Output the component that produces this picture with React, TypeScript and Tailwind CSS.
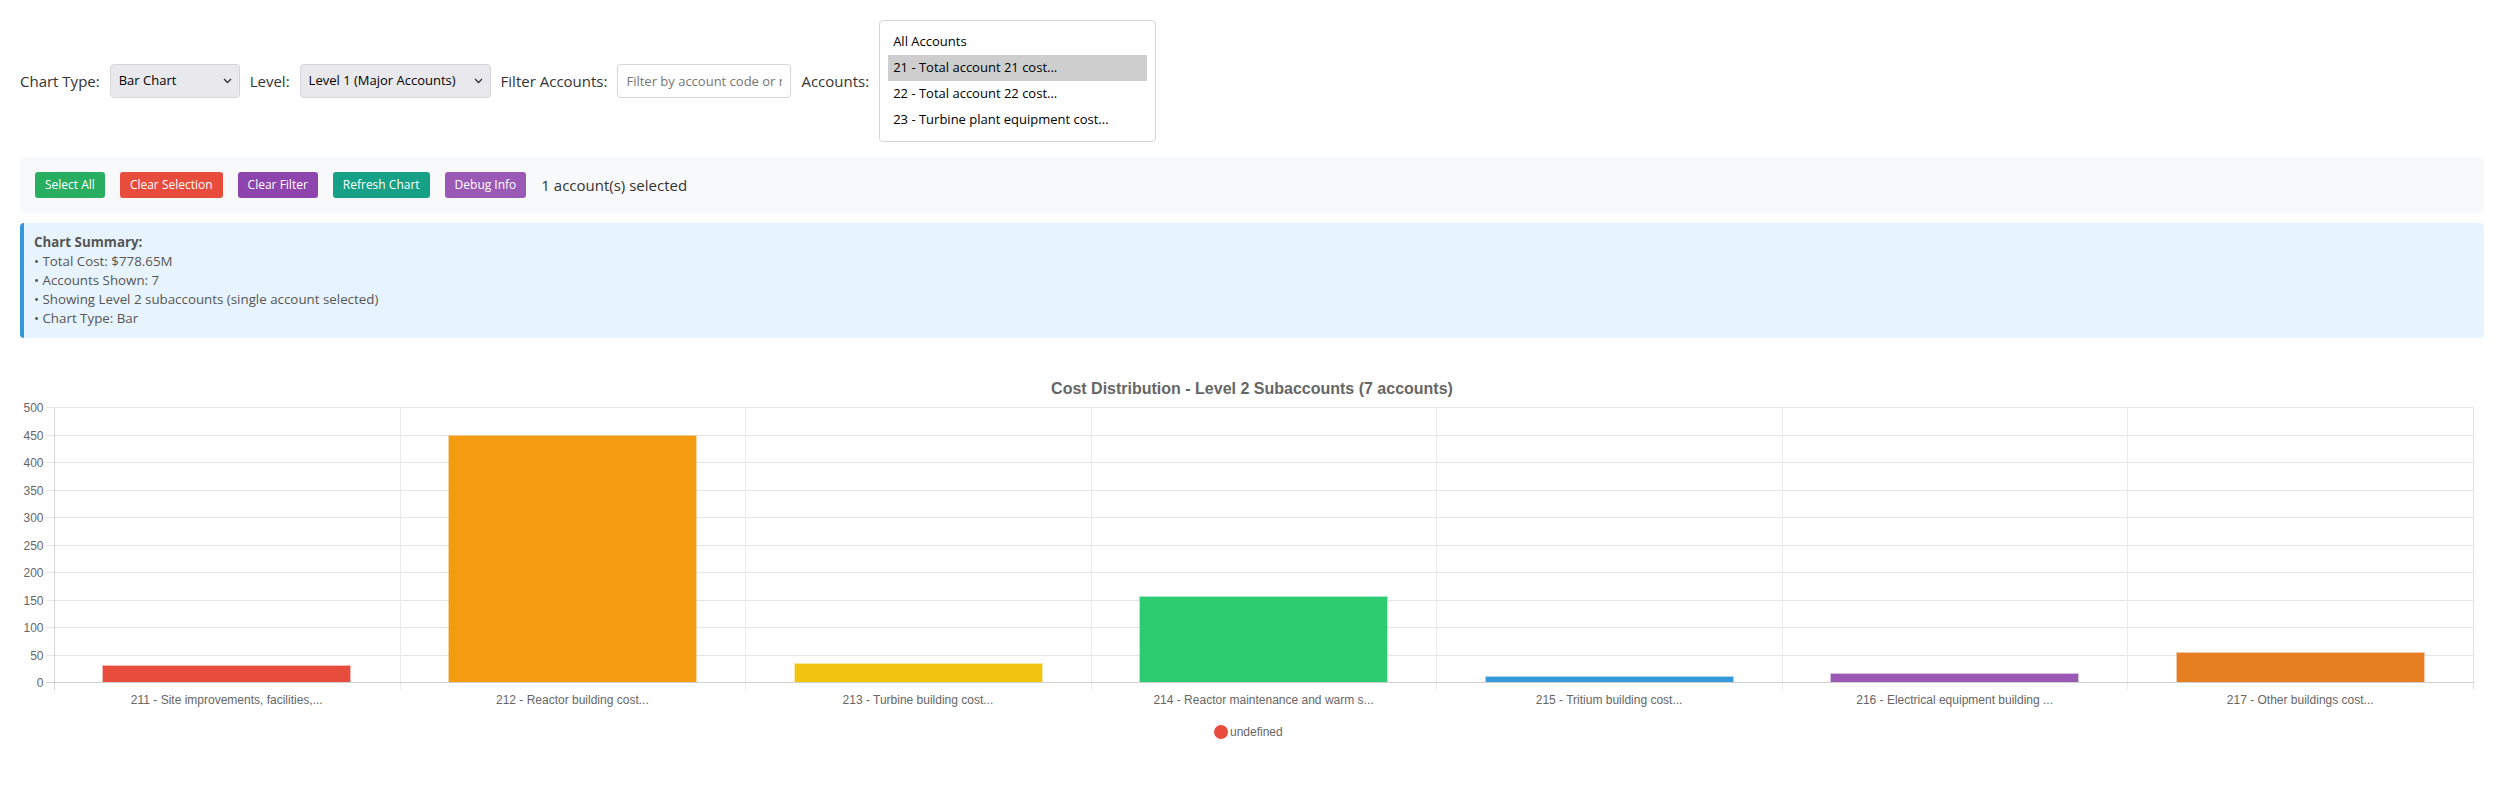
import React from "react";

const bars = [
  { label: "211 - Site improvements, facilities,...", value: 31.5, color: "#e74c3c" },
  { label: "212 - Reactor building cost...", value: 449, color: "#f39c12" },
  { label: "213 - Turbine building cost...", value: 34.5, color: "#f1c40f" },
  { label: "214 - Reactor maintenance and warm s...", value: 157, color: "#2ecc71" },
  { label: "215 - Tritium building cost...", value: 11.5, color: "#3498db" },
  { label: "216 - Electrical equipment building ...", value: 16.4, color: "#9b59b6" },
  { label: "217 - Other buildings cost...", value: 54.5, color: "#e67e22" },
];

const Chevron = () => (
  <svg width="9" height="6" viewBox="0 0 9 6" className="shrink-0">
    <path d="M1 1l3.5 3.5L8 1" fill="none" stroke="#333" strokeWidth="1.3" />
  </svg>
);

function Chart() {
  const W = 2464;
  const L = 34;
  const R = 2453;
  const T = 49;
  const B = 324;
  const cw = (R - L) / 7;
  const step = (B - T) / 10;
  const font = "'Liberation Sans', Arial, Helvetica, sans-serif";
  const ys = Array.from({ length: 11 }, (_, j) => Math.round(T + step * j) + 0.5);
  const xs = Array.from({ length: 8 }, (_, i) => Math.round(L + cw * i) + 0.5);
  const scale = (B - T) / 500;
  return (
    <svg width={W} height={420} className="block">
      <text
        x={W / 2}
        y={30}
        textAnchor="middle"
        dominantBaseline="central"
        fontFamily={font}
        fontWeight="bold"
        fontSize={16}
        fill="#666"
      >
        Cost Distribution - Level 2 Subaccounts (7 accounts)
      </text>
      {ys.map((y, j) => (
        <line key={"h" + j} x1={L - 8} x2={R + 0.5} y1={y} y2={y} stroke={j === 10 ? "#d0d0d0" : "#e6e6e6"} strokeWidth={1} />
      ))}
      {xs.map((x, i) => (
        <line
          key={"v" + i}
          x1={x}
          x2={x}
          y1={T + 0.5}
          y2={B + 8}
          stroke={i === 0 ? "#d4d4d4" : i === 7 ? "#e0e0e0" : "#ebebeb"}
          strokeWidth={1}
        />
      ))}
      {ys.map((y, j) => (
        <text
          key={"yl" + j}
          x={L - 10.5}
          y={y}
          textAnchor="end"
          dominantBaseline="central"
          fontFamily={font}
          fontSize={12}
          fill="#666"
        >
          {500 - j * 50}
        </text>
      ))}
      {bars.map((b, i) => {
        const cx = L + cw * (i + 0.5);
        const bw = cw * 0.72;
        const h = b.value * scale;
        const x = Math.round(cx - bw / 2);
        const y = Math.round(B - h);
        const w = Math.round(bw);
        return (
          <g key={"b" + i}>
            <rect x={x} y={y} width={w} height={B - y} fill={b.color} opacity={0.4} />
            <rect x={x + 1} y={y + 1} width={w - 2} height={B - y - 1} fill={b.color} />
            <text
              x={cx}
              y={B + 17.5}
              textAnchor="middle"
              dominantBaseline="central"
              fontFamily={font}
              fontSize={12}
              fill="#666"
            >
              {b.label}
            </text>
          </g>
        );
      })}
      <line x1={L - 8} x2={R + 0.5} y1={B + 0.5} y2={B + 0.5} stroke="#d0d0d0" strokeWidth={1} />
      <circle cx={1201} cy={374} r={7} fill="#e74c3c" />
      <text x={1210} y={374} dominantBaseline="central" fontFamily={font} fontSize={12} fill="#666">
        undefined
      </text>
    </svg>
  );
}

export default function App() {
  const buttons = [
    { t: "Select All", c: "bg-[#27ae60]" },
    { t: "Clear Selection", c: "bg-[#e74c3c]" },
    { t: "Clear Filter", c: "bg-[#8e44ad]" },
    { t: "Refresh Chart", c: "bg-[#16a085]" },
    { t: "Debug Info", c: "bg-[#9b59b6]" },
  ];
  const options = [
    "All Accounts",
    "21 - Total account 21 cost...",
    "22 - Total account 22 cost...",
    "23 - Turbine plant equipment cost...",
  ];
  return (
    <div className="min-h-screen bg-white p-5 font-['Open_Sans',sans-serif] text-[#333]">
      <div className="flex items-center gap-[10px]">
        <span className="text-[15px] leading-none">Chart Type:</span>
        <div className="flex h-[34px] w-[130px] items-center justify-between rounded-[4px] border border-[#d6d6da] bg-[#e9e9ed] pl-[8px] pr-[7px] text-[13px] text-black">
          <span>Bar Chart</span>
          <Chevron />
        </div>
        <span className="text-[15px] leading-none">Level:</span>
        <div className="flex h-[34px] w-[191px] items-center justify-between rounded-[4px] border border-[#d6d6da] bg-[#e9e9ed] pl-[8px] pr-[7px] text-[13px] text-black">
          <span>Level 1 (Major Accounts)</span>
          <Chevron />
        </div>
        <span className="text-[15px] leading-none">Filter Accounts:</span>
        <input
          className="h-[34px] w-[174px] rounded-[4px] border border-[#d4d4d4] bg-white px-[8px] text-[13px] outline-none placeholder:text-[#757575]"
          placeholder="Filter by account code or name..."
        />
        <span className="text-[15px] leading-none">Accounts:</span>
        <div className="w-[277px] rounded-[4px] border border-[#d4d4d4] bg-white p-2">
          {options.map((o, i) => (
            <div
              key={o}
              className={
                "flex h-[26px] items-center px-[5px] text-[13px] text-black " + (i === 1 ? "bg-[#cecece]" : "")
              }
            >
              {o}
            </div>
          ))}
        </div>
      </div>

      <div className="mt-[15px] flex items-center gap-[15px] rounded-[5px] bg-[#f8f9fa] p-[15px]">
        {buttons.map((b) => (
          <button
            key={b.t}
            className={"flex h-[26px] items-center rounded-[3px] px-[10px] text-[12px] leading-none text-white " + b.c}
          >
            {b.t}
          </button>
        ))}
        <span className="text-[15px] leading-none text-[#333]">1 account(s) selected</span>
      </div>

      <div className="mt-[10px] rounded-[4px] border-l-4 border-[#3498db] bg-[#e8f4fd] p-[10px] text-[13.33px] leading-[19px] text-[#555]">
        <div className="font-bold">Chart Summary:</div>
        <div>• Total Cost: $778.65M</div>
        <div>• Accounts Shown: 7</div>
        <div>• Showing Level 2 subaccounts (single account selected)</div>
        <div>• Chart Type: Bar</div>
      </div>

      <div className="mt-[20px]">
        <Chart />
      </div>
    </div>
  );
}
